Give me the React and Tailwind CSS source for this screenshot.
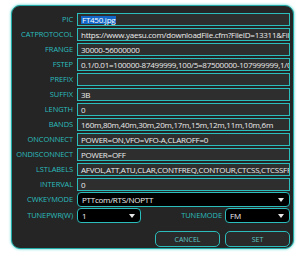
import React from "react";

const rows = [
  { label: "PIC", value: "FT450.jpg", selected: true },
  { label: "CATPROTOCOL", value: "https://www.yaesu.com/downloadFile.cfm?FileID=13311&FileCatID=158" },
  { label: "FRANGE", value: "30000-56000000" },
  { label: "FSTEP", value: "0.1/0.01=100000-87499999,100/5=87500000-107999999,1/0.1=108000000" },
  { label: "PREFIX", value: "" },
  { label: "SUFFIX", value: "3B" },
  { label: "LENGTH", value: "0" },
  { label: "BANDS", value: "160m,80m,40m,30m,20m,17m,15m,12m,11m,10m,6m" },
  { label: "ONCONNECT", value: "POWER=ON,VFO=VFO-A,CLAROFF=0" },
  { label: "ONDISCONNECT", value: "POWER=OFF" },
  { label: "LSTLABELS", value: "AFVOL,ATT,ATU,CLAR,CONTFREQ,CONTOUR,CTCSS,CTCSSFREQ,DNR" },
  { label: "INTERVAL", value: "0" },
];

const Arrow = () => (
  <svg width="6" height="4" viewBox="0 0 6 4" className="shrink-0">
    <path d="M0 0 L6 0 L3 4 Z" fill="#e8e8e8" />
  </svg>
);

const Label = ({ children }) => (
  <div className="w-[65px] shrink-0 text-right text-[7.5px] leading-none text-[#2bbcbc] pr-[4px] whitespace-nowrap tracking-[-0.1px]">
    {children}
  </div>
);

const Select = ({ value, className }) => (
  <div
    className={
      "flex items-center justify-between h-[15px] rounded-[4px] border border-[#2bbcbc] bg-black pl-[4px] pr-[5px] text-[8px] text-[#f0f0f0] tracking-[-0.25px] " +
      className
    }
  >
    <span className="leading-none">{value}</span>
    <Arrow />
  </div>
);

export default function App() {
  return (
    <div
      className="w-[298px] h-[267px] bg-white pt-[5px] pl-[11px]"
      style={{ fontFamily: '"Open Sans", "Noto Sans", sans-serif' }}
    >
      <div className="w-[283px] h-[244px] rounded-[9px] border border-[#22aaa6] bg-[#252525] shadow-[0_0_3px_#3fd0c8] pt-[7px] pr-[3px] flex flex-col">
        <div className="flex flex-col gap-[2px]">
          {rows.map((r) => (
            <div key={r.label} className="flex items-center h-[13px]">
              <Label>{r.label}</Label>
              <div className="flex-1 min-w-0 h-[13px] border border-[#2bbcbc] bg-[#2e2e2e] pl-[3px] flex items-center overflow-hidden whitespace-nowrap text-[8px] leading-none text-[#ececec] tracking-[-0.25px]">
                {r.selected ? (
                  <span className="bg-[#1367c8] text-white px-[1px]">{r.value}</span>
                ) : (
                  r.value
                )}
              </div>
            </div>
          ))}
          <div className="flex items-center h-[13px]">
            <Label>CWKEYMODE</Label>
            <Select value="PTTcom/RTS/NOPTT" className="flex-1 h-[13px]" />
          </div>
        </div>
        <div className="flex items-center mt-[2px] h-[15px]">
          <Label>TUNEPWR(W)</Label>
          <Select value="1" className="w-[64px]" />
          <div className="flex-1 text-right text-[7.5px] leading-none text-[#2bbcbc] pr-[3px] tracking-[-0.1px]">
            TUNEMODE
          </div>
          <Select value="FM" className="w-[65px]" />
        </div>
        <div className="flex justify-end gap-[5px] mt-[8px]">
          <button className="w-[65px] h-[16px] rounded-[5px] border border-[#2bbcbc] bg-[#2a2a2a] text-[7px] text-[#5cc8c8] leading-none">
            CANCEL
          </button>
          <button className="w-[65px] h-[16px] rounded-[5px] border border-[#2bbcbc] bg-[#2a2a2a] text-[7px] text-[#5cc8c8] leading-none">
            SET
          </button>
        </div>
      </div>
    </div>
  );
}
